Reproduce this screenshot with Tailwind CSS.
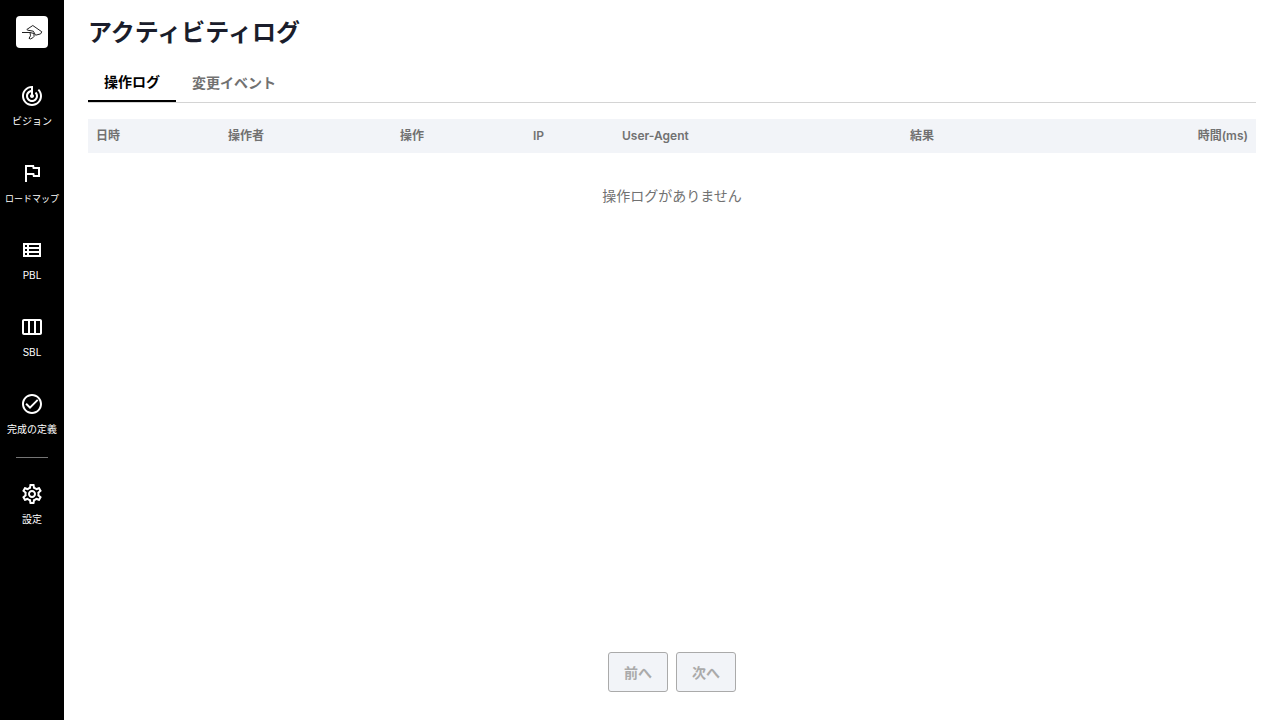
<!DOCTYPE html>
<html lang="ja">

<head>
    <meta charset="UTF-8">
    <meta name="viewport" content="width=device-width, initial-scale=1.0">
    <title>アクティビティログ</title>
    <script src="https://cdn.jsdelivr.net/npm/@tailwindcss/browser@4"></script>
</head>

<body class="flex min-h-screen bg-white font-['Inter','Noto_Sans_CJK_JP',sans-serif] text-sm text-[#717171]">
    <!-- Sidebar -->
    <aside class="flex w-16 shrink-0 flex-col items-center bg-black pt-4 text-white">
        <a href="#" aria-label="ホーム" class="mb-5 block size-8 rounded bg-white">
            <svg class="size-8" viewBox="0 0 32 32" fill="none" stroke="#222" stroke-width="1" stroke-linejoin="round">
                <path d="M6 16.500h8M10.800 13.500l6-4 9 6.300-1.200 2.100-5 1.300-2.300-4-5.500-1zM14 16.500l4 1v3l-1.200 1.300-2.500 1.200-1.300-.7 1.500-2.500z" />
            </svg>
        </a>
        <nav class="flex w-full flex-col items-center text-[10px] leading-[15px]">
            <a href="#" class="flex w-full flex-col items-center gap-1.5 whitespace-nowrap py-4">
                <svg class="size-6" viewBox="0 0 24 24" fill="currentColor">
                    <path d="m19.070 4.930-1.410 1.410C19.100 7.790 20 9.790 20 12c0 4.420-3.580 8-8 8s-8-3.580-8-8c0-4.080 3.050-7.440 7-7.930v2.020C8.160 6.570 6 9.030 6 12c0 3.310 2.690 6 6 6s6-2.690 6-6c0-1.660-.67-3.160-1.760-4.240l-1.410 1.410C15.550 9.900 16 10.900 16 12c0 2.210-1.790 4-4 4s-4-1.790-4-4c0-1.860 1.280-3.410 3-3.860v2.140c-.6.35-1 .98-1 1.720 0 1.100.9 2 2 2s2-.9 2-2c0-.74-.4-1.380-1-1.720V2h-1C6.480 2 2 6.480 2 12s4.480 10 10 10 10-4.480 10-10c0-2.760-1.120-5.260-2.930-7.070z" />
                </svg>
                <span>ビジョン</span>
            </a>
            <a href="#" class="flex w-full flex-col items-center gap-1.5 whitespace-nowrap py-4">
                <svg class="size-6" viewBox="0 0 24 24" fill="currentColor">
                    <path d="m12.360 6 .4 2H18v6h-3.360l-.4-2H7V6h5.360M14 4H5v17h2v-7h5.600l.4 2h7V6h-5.600L14 4z" />
                </svg>
                <span class="text-[9px]">ロードマップ</span>
            </a>
            <a href="#" class="flex w-full flex-col items-center gap-1.5 whitespace-nowrap py-4">
                <svg class="size-6" viewBox="0 0 24 24" fill="currentColor">
                    <path d="M3 5v14h18V5H3zm4 2v2H5V7h2zm-2 6v-2h2v2H5zm0 2h2v2H5v-2zm14 2H9v-2h10v2zm0-4H9v-2h10v2zm0-4H9V7h10v2z" />
                </svg>
                <span>PBL</span>
            </a>
            <a href="#" class="flex w-full flex-col items-center gap-1.5 whitespace-nowrap py-4">
                <svg class="size-6" viewBox="0 0 24 24" fill="currentColor">
                    <path d="M20 4H4c-1.100 0-2 .9-2 2v12c0 1.100.9 2 2 2h16c1.100 0 2-.9 2-2V6c0-1.100-.9-2-2-2zM8 18H4V6h4v12zm6 0h-4V6h4v12zm6 0h-4V6h4v12z" />
                </svg>
                <span>SBL</span>
            </a>
            <a href="#" class="flex w-full flex-col items-center gap-1.5 whitespace-nowrap py-4">
                <svg class="size-6" viewBox="0 0 24 24" fill="currentColor">
                    <path d="M12 2C6.480 2 2 6.480 2 12s4.480 10 10 10 10-4.480 10-10S17.520 2 12 2zm0 18c-4.410 0-8-3.590-8-8s3.590-8 8-8 8 3.590 8 8-3.590 8-8 8zm5-12.800L10 14.170l-3.200-3.200L5.400 12.400l4.600 4.600 8.400-8.400z" />
                </svg>
                <span>完成の定義</span>
            </a>
            <div class="mt-1 mb-2 h-px w-8 bg-[#757575]"></div>
            <a href="#" class="flex w-full flex-col items-center gap-1.5 whitespace-nowrap py-4">
                <svg class="size-6" viewBox="0 0 24 24" fill="currentColor">
                    <path d="M19.430 12.980c.04-.32.07-.64.07-.98 0-.34-.03-.66-.07-.98l2.110-1.650c.19-.15.24-.42.12-.64l-2-3.460c-.09-.16-.26-.25-.44-.25-.06 0-.12.01-.17.03l-2.490 1c-.52-.4-1.080-.73-1.690-.98l-.38-2.650C14.460 2.180 14.250 2 14 2h-4c-.25 0-.46.18-.49.42l-.38 2.650c-.61.25-1.170.59-1.690.98l-2.490-1c-.06-.02-.12-.03-.18-.03-.17 0-.34.09-.43.25l-2 3.460c-.13.22-.07.49.12.64l2.110 1.650c-.04.32-.07.65-.07.98 0 .33.03.66.07.98l-2.110 1.650c-.19.15-.24.42-.12.64l2 3.460c.09.16.26.25.44.25.06 0 .12-.01.17-.03l2.490-1c.52.4 1.080.73 1.690.98l.38 2.650c.03.24.24.42.49.42h4c.25 0 .46-.18.49-.42l.38-2.650c.61-.25 1.170-.59 1.690-.98l2.490 1c.06.02.12.03.18.03.17 0 .34-.09.43-.25l2-3.460c.12-.22.07-.49-.12-.64l-2.110-1.650zm-1.980-1.710c.04.31.05.52.05.73 0 .21-.02.43-.05.73l-.14 1.130.89.7 1.080.84-.7 1.210-1.270-.51-1.040-.42-.9.68c-.43.32-.84.56-1.250.73l-1.060.43-.16 1.130-.2 1.350h-1.400l-.19-1.350-.16-1.130-1.060-.43c-.43-.18-.83-.41-1.230-.71l-.91-.7-1.060.43-1.270.51-.7-1.210 1.080-.84.89-.7-.14-1.130c-.03-.31-.05-.54-.05-.74s.02-.43.05-.73l.14-1.130-.89-.7-1.080-.84.7-1.210 1.270.51 1.040.42.9-.68c.43-.32.84-.56 1.250-.73l1.060-.43.16-1.130.2-1.350h1.390l.19 1.350.16 1.130 1.060.43c.43.18.83.41 1.230.71l.91.7 1.060-.43 1.270-.51.7 1.210-1.070.85-.89.7.14 1.130zM12 8c-2.210 0-4 1.790-4 4s1.790 4 4 4 4-1.790 4-4-1.790-4-4-4zm0 6c-1.100 0-2-.9-2-2s.9-2 2-2 2 .9 2 2-.9 2-2 2z" />
                </svg>
                <span>設定</span>
            </a>
        </nav>
    </aside>

    <main class="flex min-w-0 flex-1 flex-col px-6 pt-4 pb-7">
        <h1 class="text-2xl leading-[34px] font-bold text-[#1a1d2b]">アクティビティログ</h1>

        <!-- Tabs -->
        <div role="tablist" class="mt-3.5 flex h-[39px] border-b border-[#d4d4d4] font-semibold">
            <button type="button" role="tab" aria-selected="true" class="border-b-2 border-black px-4 text-black">操作ログ</button>
            <button type="button" role="tab" aria-selected="false" class="px-4">変更イベント</button>
        </div>

        <div class="mt-4 flex-1">
            <table class="w-full table-fixed">
                <thead class="bg-[#f2f4f8] text-left text-xs leading-[18px]">
                    <tr>
                        <th class="w-[132px] p-2 font-semibold">日時</th>
                        <th class="w-[172px] p-2 font-semibold">操作者</th>
                        <th class="w-[133px] p-2 font-semibold">操作</th>
                        <th class="w-[89px] p-2 font-semibold">IP</th>
                        <th class="w-[288px] p-2 font-semibold">User-Agent</th>
                        <th class="p-2 font-semibold">結果</th>
                        <th class="p-2 text-right font-semibold">時間(ms)</th>
                    </tr>
                </thead>
                <tbody>
                    <tr>
                        <td colspan="7" class="px-2 py-8 text-center leading-[21px]">操作ログがありません</td>
                    </tr>
                </tbody>
            </table>
        </div>

        <!-- Pagination -->
        <div class="flex justify-center gap-2 font-semibold">
            <button type="button" disabled class="h-10 w-[60px] rounded-[3px] border border-[#aaaaaa] bg-[#f2f4f8] pt-0.5 text-[#aaaaaa]">前へ</button>
            <button type="button" disabled class="h-10 w-[60px] rounded-[3px] border border-[#aaaaaa] bg-[#f2f4f8] pt-0.5 text-[#aaaaaa]">次へ</button>
        </div>
    </main>
</body>

</html>
